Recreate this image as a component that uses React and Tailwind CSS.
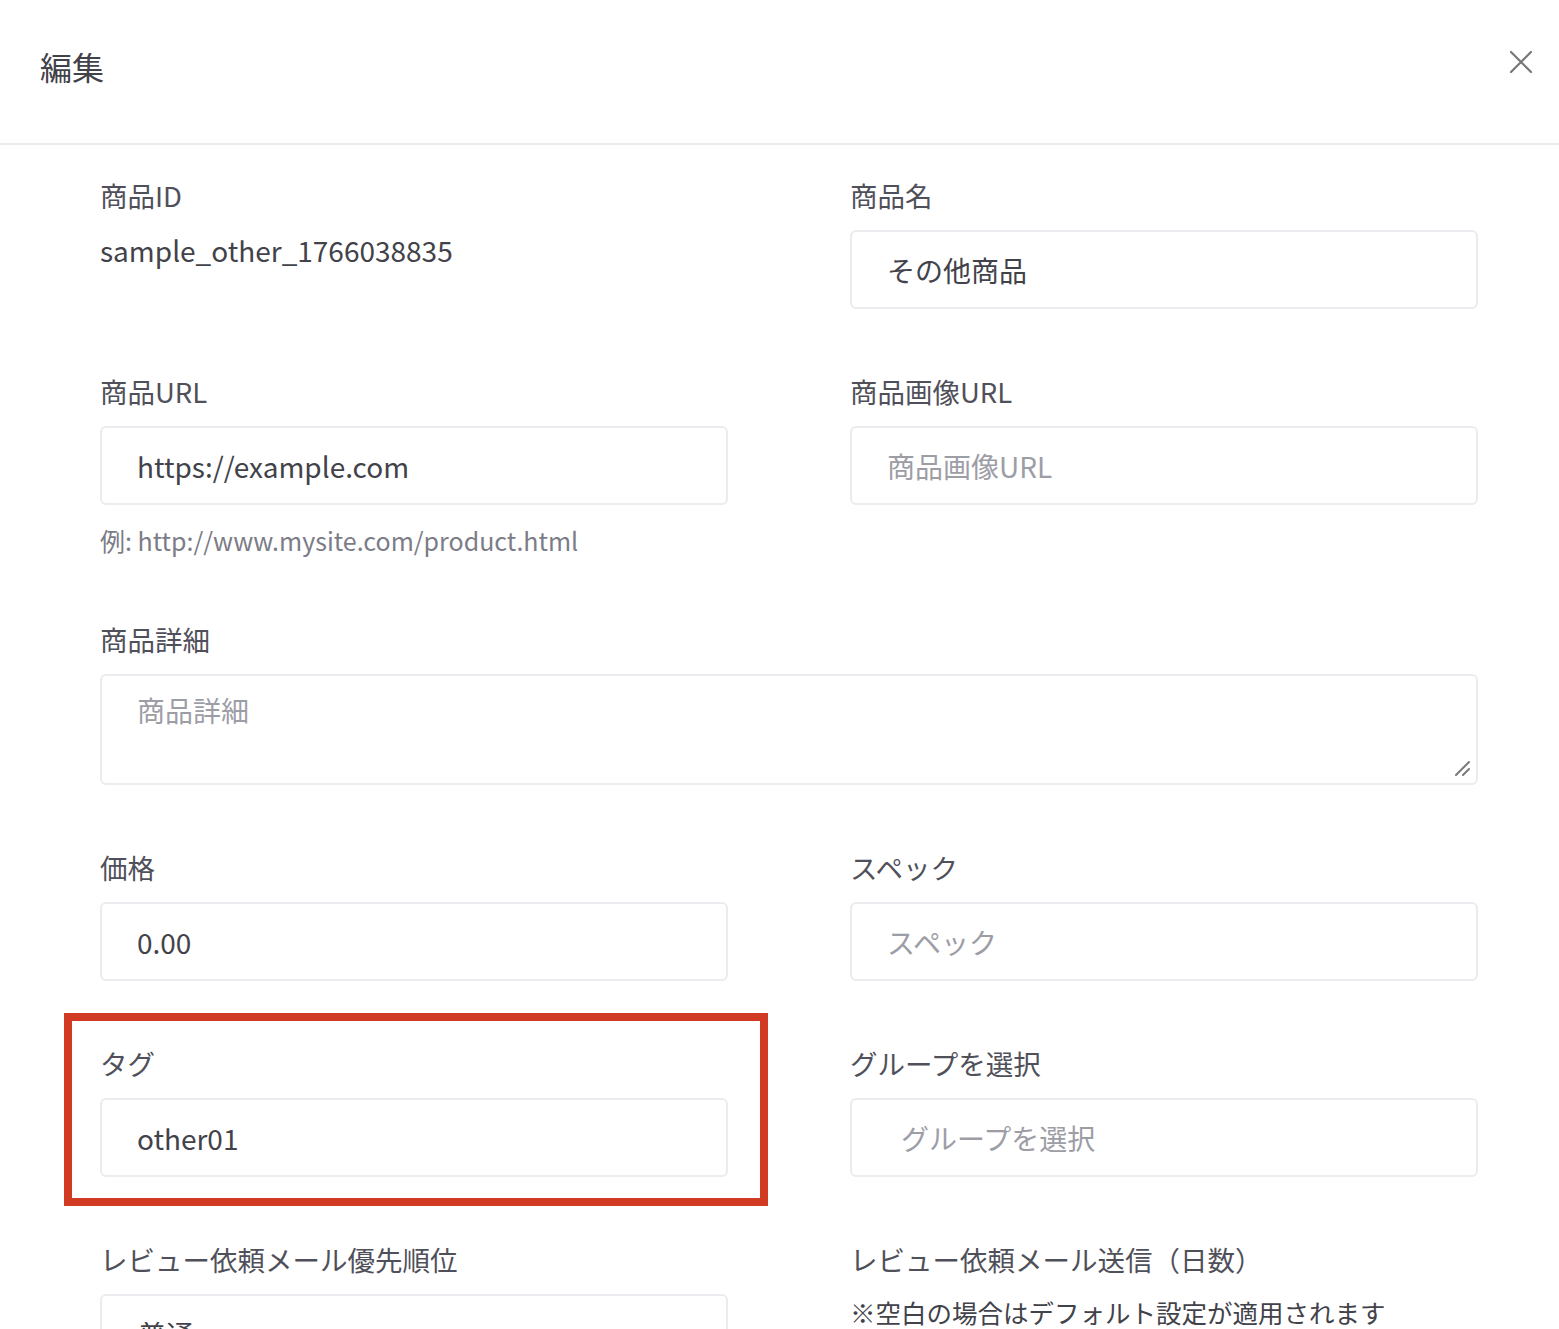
import { ChevronDown } from 'lucide-react';

const font = { fontFamily: '"Noto Sans CJK JP", "Noto Sans", sans-serif' };

function Label({ children }) {
  return <div className="text-[27.5px] leading-[36px] text-[#50505a] mb-[17px]">{children}</div>;
}

function TextInput({ value, placeholder, className = '' }) {
  return (
    <input
      type="text"
      defaultValue={value}
      placeholder={placeholder}
      className={`w-full h-[79px] border-2 border-[#ebebf0] rounded-md text-[28px] text-[#42424a] placeholder:text-[#9d9da6] bg-white outline-none ${className || 'px-[35px]'}`}
      style={font}
    />
  );
}

export default function App() {
  return (
    <div className="min-h-screen bg-white" style={font}>
      {/* Header */}
      <div className="h-[145px] border-b-2 border-[#ebebef] flex items-center justify-between pl-[40px] pr-[26px] pb-[12px]">
        <h1 className="text-[32px] text-[#42424a] font-normal">編集</h1>
        <button className="w-[24px] h-[24px] mb-[8px] flex items-center justify-center text-[#777777]" aria-label="close">
          <svg width="24" height="24" viewBox="0 0 24 24" fill="none" stroke="currentColor" strokeWidth="2.2" strokeLinecap="round">
            <path d="M2 2 L22 22 M22 2 L2 22" />
          </svg>
        </button>
      </div>

      {/* Form */}
      <div className="pl-[100px] pr-[81px] pt-[32px] grid grid-cols-2 gap-x-[122px] gap-y-[64px] items-start">
        <div>
          <Label>商品ID</Label>
          <div className="text-[28px] leading-[40px] text-[#42424a]">sample_other_1766038835</div>
        </div>
        <div>
          <Label>商品名</Label>
          <TextInput value="その他商品" />
        </div>

        <div>
          <Label>商品URL</Label>
          <TextInput value="https://example.com" />
          <div className="mt-[18px] text-[25px] leading-[34px] text-[#7c7c87]">例: http://www.mysite.com/product.html</div>
        </div>
        <div>
          <Label>商品画像URL</Label>
          <TextInput placeholder="商品画像URL" />
        </div>

        <div className="col-span-2">
          <Label>商品詳細</Label>
          <div className="relative">
            <textarea
              placeholder="商品詳細"
              className="block w-full h-[111px] resize-none border-2 border-[#ebebf0] rounded-md text-[28px] leading-[36px] px-[35px] py-[16px] text-[#42424a] placeholder:text-[#9d9da6] outline-none"
              style={font}
            />
            <svg className="absolute right-[8px] bottom-[9px] text-[#7a7a7a]" width="16" height="16" viewBox="0 0 16 16" fill="none" stroke="currentColor" strokeWidth="2" strokeLinecap="round">
              <path d="M2 15 L15 2 M9 15 L15 9" />
            </svg>
          </div>
        </div>

        <div>
          <Label>価格</Label>
          <TextInput value="0.00" />
        </div>
        <div>
          <Label>スペック</Label>
          <TextInput placeholder="スペック" />
        </div>

        <div className="relative">
          <div className="absolute -left-[36px] -top-[32px] -right-[40px] -bottom-[29px] border-[8px] border-[#d13b23] pointer-events-none" />
          <Label>タグ</Label>
          <TextInput value="other01" />
        </div>
        <div>
          <Label>グループを選択</Label>
          <TextInput placeholder="グループを選択" className="pl-[49px] pr-[35px]" />
        </div>

        <div>
          <Label>レビュー依頼メール優先順位</Label>
          <div className="w-full h-[79px] border-2 border-[#ebebf0] rounded-md flex items-center justify-between pl-[36px] pr-[38px]">
            <span className="text-[28px] text-[#42424a]">普通</span>
            <ChevronDown className="w-[22px] h-[22px] text-[#777777]" strokeWidth={2} />
          </div>
        </div>
        <div>
          <div className="text-[27.5px] leading-[36px] text-[#50505a]">レビュー依頼メール送信（日数）</div>
          <div className="mt-[17px] text-[25.5px] leading-[36px] text-[#42424a]">※空白の場合はデフォルト設定が適用されます</div>
        </div>
      </div>
      <div className="h-[200px]" />
    </div>
  );
}
